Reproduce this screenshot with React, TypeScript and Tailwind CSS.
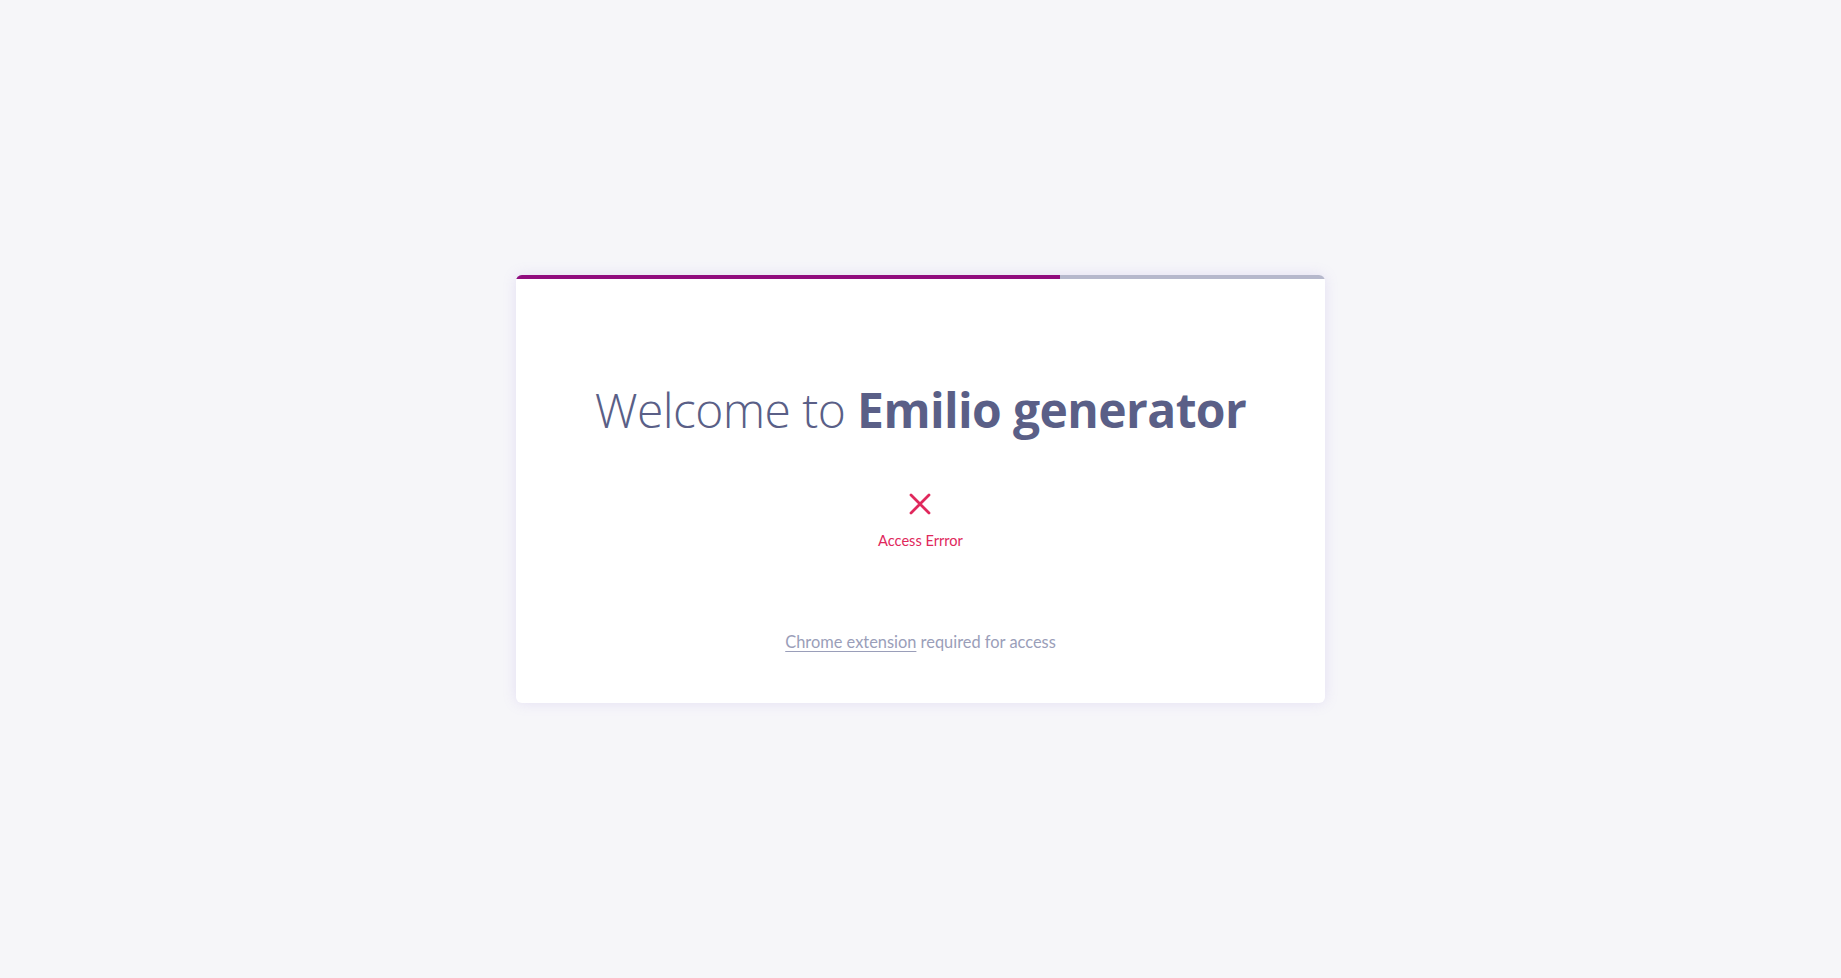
import React from "react";

const App: React.FC = () => {
  return (
    <div className="min-h-screen w-full bg-[#f6f6f9] flex items-center justify-center font-['Lato',sans-serif]">
      <div className="w-[809px] bg-white rounded-md shadow-[0_0_14px_rgba(150,120,220,0.18)] overflow-hidden">
        {/* progress */}
        <div className="flex h-[4px] w-full bg-[#b6b8cc]">
          <div className="h-full w-[544px] bg-[#910c7e]" />
        </div>

        <div className="flex flex-col items-center pt-[102px] pb-[50px]">
          <h1 className="text-[48px] leading-[57px] text-[#5a5f87] font-['Open_Sans',sans-serif] tracking-[-0.6px]">
            <span className="font-light">Welcome to </span>
            <span className="font-bold">Emilio generator</span>
          </h1>

          <div className="mt-[54px] flex flex-col items-center">
            <svg width="24" height="24" viewBox="0 0 24 24" fill="none">
              <path
                d="M3 3 L21 21 M21 3 L3 21"
                stroke="#e0285c"
                strokeWidth="2.8"
                strokeLinecap="round"
              />
            </svg>
            <span className="mt-[15px] text-[14.6px] leading-[20px] text-[#e0285c]">
              Access Errror
            </span>
          </div>

          <p className="mt-[80px] text-[16.4px] leading-[22px] text-[#9a9eb9]">
            <a href="#" className="underline underline-offset-[3px] decoration-[#9a9eb9]">
              Chrome extension
            </a>{" "}
            required for access
          </p>
        </div>
      </div>
    </div>
  );
};

export default App;
